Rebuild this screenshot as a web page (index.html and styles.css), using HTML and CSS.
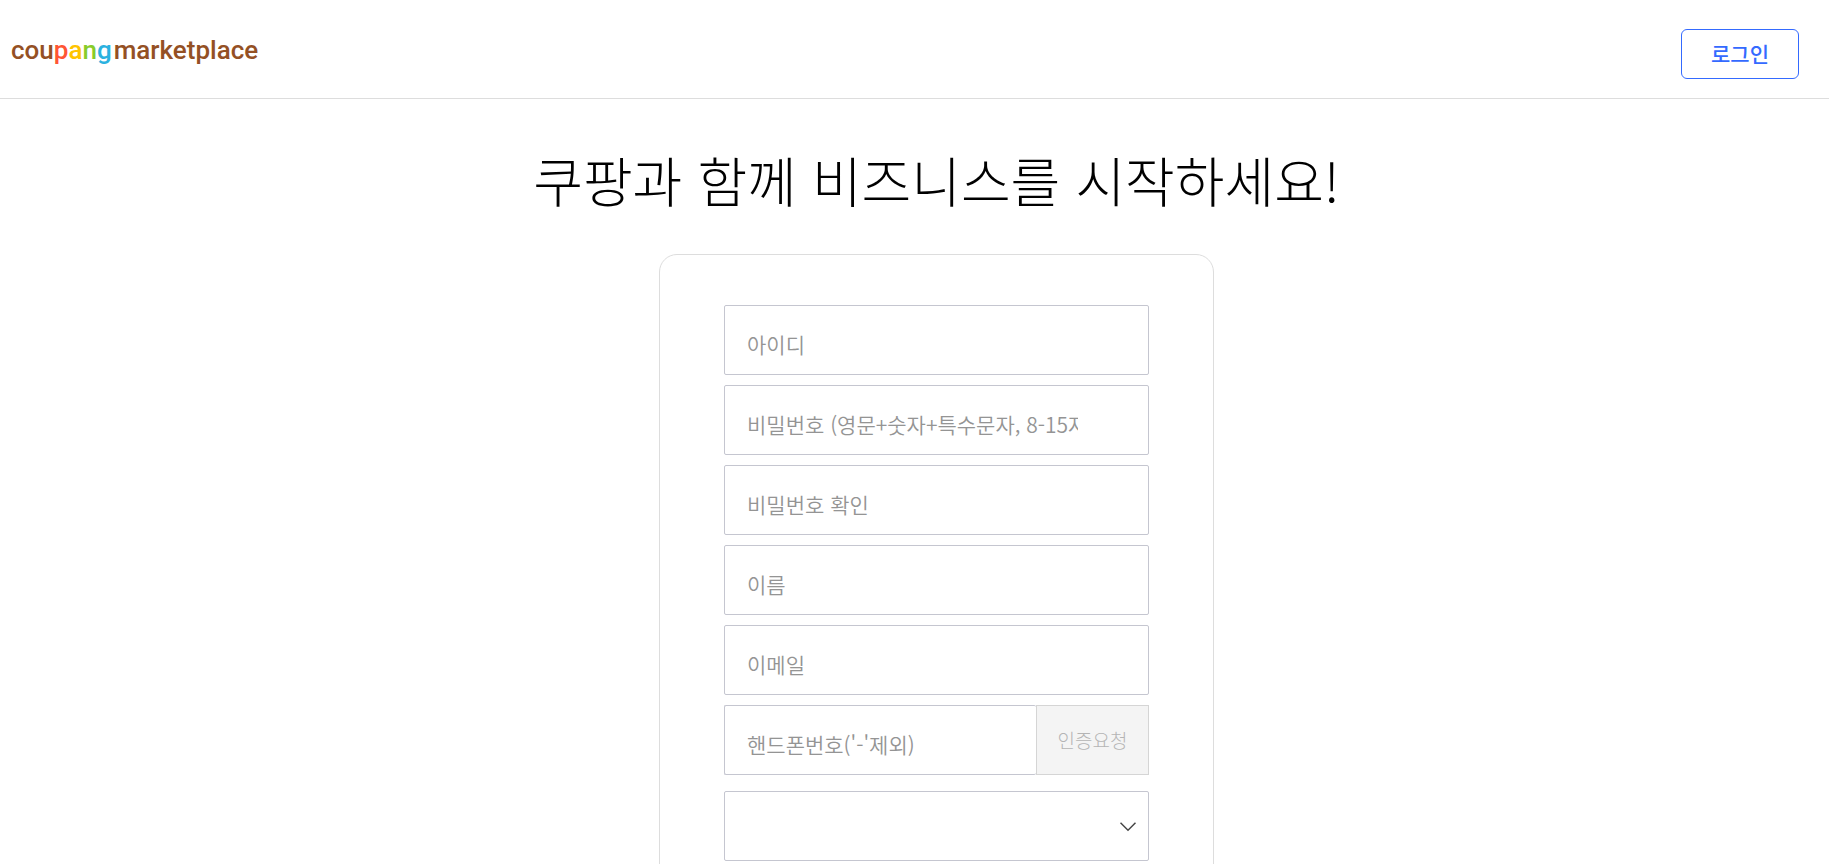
FILE: index.html
```html
<!DOCTYPE html>
<html lang="ko">

<head>
    <meta charset="UTF-8">
    <meta name="viewport" content="width=device-width, initial-scale=1.0">
    <title>coupang marketplace</title>
    <link rel="stylesheet" href="styles.css">
</head>

<body>
    <header class="header">
        <a class="logo" href="#" aria-label="coupang marketplace">
            <span>cou<span class="logo-red">p</span><span class="logo-yellow">a</span><span class="logo-green">n</span><span class="logo-blue">g</span></span>
            <span>marketplace</span>
        </a>
        <button type="button" class="login-btn">로그인</button>
    </header>

    <main class="container">
        <h1>쿠팡과 함께 비즈니스를 시작하세요!</h1>

        <form class="join-form">
            <input type="text" class="field" aria-label="아이디" placeholder="아이디">
            <input type="password" class="field" aria-label="비밀번호" placeholder="비밀번호 (영문+숫자+특수문자, 8-15자)">
            <input type="password" class="field" aria-label="비밀번호 확인" placeholder="비밀번호 확인">
            <input type="text" class="field" aria-label="이름" placeholder="이름">
            <input type="email" class="field" aria-label="이메일" placeholder="이메일">

            <div class="phone-group">
                <input type="tel" class="field" aria-label="핸드폰번호" placeholder="핸드폰번호('-'제외)">
                <button type="button" class="verify-btn" disabled>인증요청</button>
            </div>

            <div class="select-group">
                <select class="field" aria-label="사업자 유형">
                    <option value=""></option>
                </select>
                <svg class="arrow" width="16" height="10" viewBox="0 0 16 10" aria-hidden="true">
                    <path d="M0.5 0.8L8 8.3l7.500-7.500" fill="none" stroke="#444" stroke-width="1.500" />
                </svg>
            </div>
        </form>
    </main>
</body>

</html>
```
FILE: styles.css
```css
* {
    box-sizing: border-box;
}

body {
    margin: 0;
    background: #fff;
    color: #000;
    font-family: "Noto Sans CJK KR", "Noto Sans", sans-serif;
}

input,
select,
button {
    font-family: inherit;
}

.header {
    display: flex;
    justify-content: space-between;
    align-items: flex-start;
    height: 99px;
    padding: 29px 30px 0 11px;
    border-bottom: 1px solid #ddd;
}

.logo {
    display: flex;
    gap: 2px;
    color: #945024;
    font-family: Roboto, sans-serif;
    font-size: 26px;
    font-weight: 500;
    line-height: 42px;
    text-decoration: none;
}

.logo-red {
    color: #ff5534;
}

.logo-yellow {
    color: #ffc400;
}

.logo-green {
    color: #88cc2a;
}

.logo-blue {
    color: #2bb2e0;
}

.login-btn {
    width: 118px;
    height: 50px;
    padding: 0 0 2px;
    border: 1px solid #346aff;
    border-radius: 6px;
    background: #fff;
    color: #346aff;
    font-size: 21px;
    font-weight: 500;
    cursor: pointer;
}

.container {
    padding: 0 0 40px 44px;
}

h1 {
    margin: 41px 0 34px;
    font-size: 54px;
    font-weight: 300;
    line-height: 80px;
    text-align: center;
}

.join-form {
    display: flex;
    flex-direction: column;
    gap: 10px;
    max-width: 555px;
    margin: 0 auto;
    padding: 50px 64px;
    border: 1px solid #ddd;
    border-radius: 18px;
}

.field {
    width: 100%;
    height: 70px;
    padding: 8px 70px 0 22px;
    border: 1px solid #c5c6d0;
    border-radius: 2px;
    background: #fff;
    color: #111;
    font-size: 21px;
    font-weight: 350;
}

.field::placeholder {
    color: #949494;
    opacity: 1;
}

.phone-group {
    display: flex;
}

.phone-group .field {
    flex: 1;
    min-width: 0;
    padding-right: 22px;
    border-right: none;
}

.verify-btn {
    width: 113px;
    height: 70px;
    padding: 0 0 2px;
    border: 1px solid #d5d5d5;
    background: #f4f4f4;
    color: #b4b4b4;
    font-size: 19px;
    font-weight: 300;
}

.select-group {
    position: relative;
    margin-top: 6px;
}

.select-group .field {
    display: block;
    appearance: none;
}

.arrow {
    position: absolute;
    top: 31px;
    right: 13px;
    pointer-events: none;
}
```
